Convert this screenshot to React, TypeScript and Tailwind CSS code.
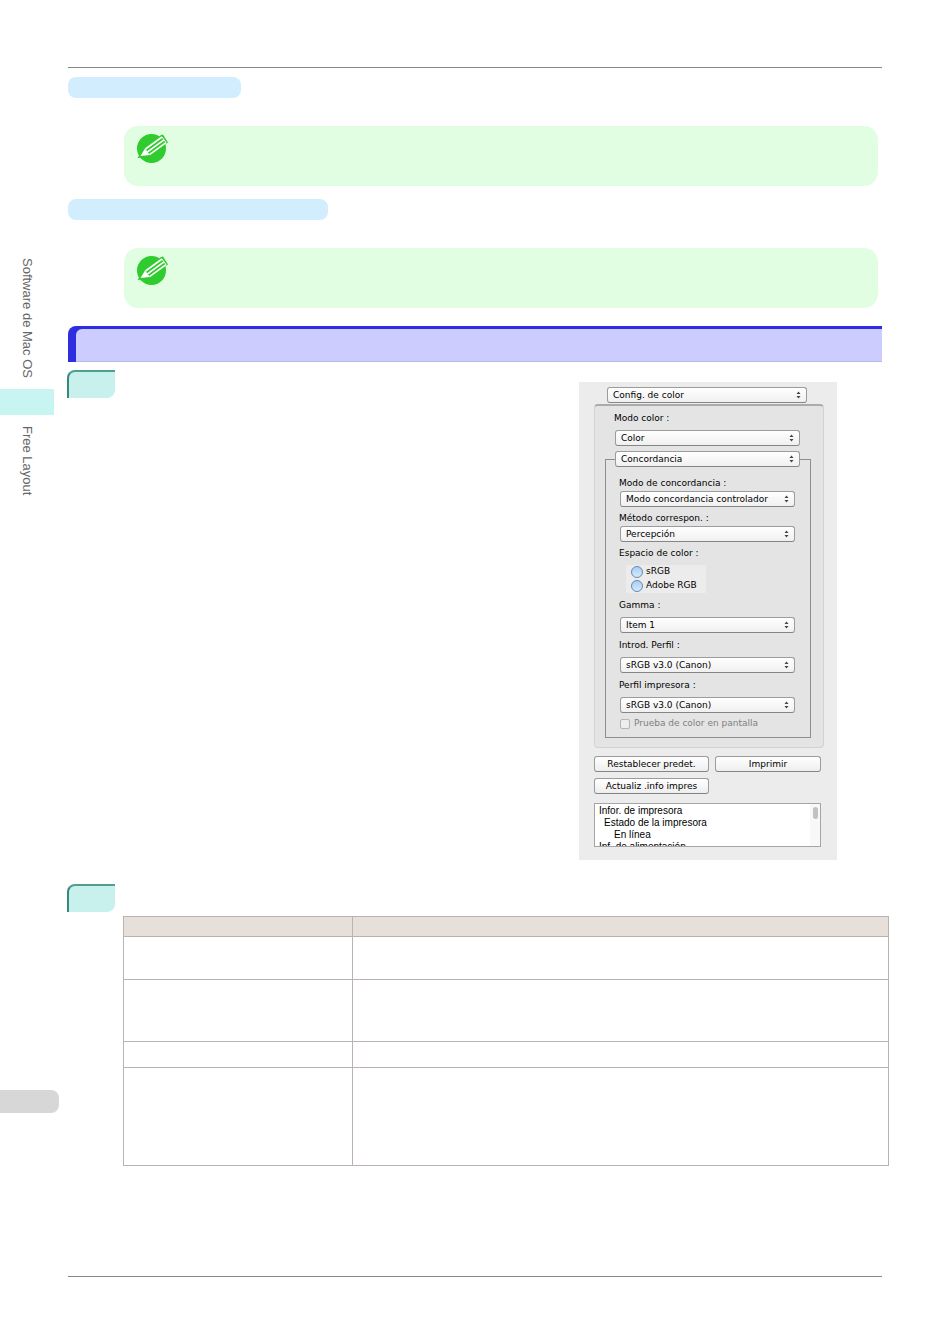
import React, { useId } from 'react';
import clsx from 'clsx';

const NoteIcon: React.FC = () => (
  <svg className="block h-8 w-8" viewBox="0 0 32 32" aria-hidden="true">
    <circle cx="15.5" cy="15.5" r="14.5" fill="#2fcb2f" />
    <path d="M1.500 25 L6 18 L25 2 L27 1.500 L32 9.500 L12 24 Z" fill="#2fcb2f" />
    <path d="M4.500 23 L9 15.500 L14 22 Z" fill="#fff" />
    <path
      d="M9.500 16 L26 4 M11.500 18.800 L28 6.800 M13.500 21.600 L30 9.600"
      fill="none"
      stroke="#fff"
      strokeWidth="1.600"
    />
    <path d="M26 4 L30 9.600" stroke="#fff" strokeWidth="1" />
  </svg>
);

const Pill: React.FC<{ className: string }> = ({ className }) => (
  <div className={clsx('h-[21px] rounded-lg bg-[#d2eefe]', className)} />
);

const Note: React.FC = () => (
  <div className="ml-14 mr-1 mt-7 h-[60px] rounded-[14px] bg-[#e2fee2] pl-3 pt-[7px]">
    <NoteIcon />
  </div>
);

const StepTab: React.FC = () => (
  <div className="-ml-px h-7 w-12 shrink-0 rounded-tl-lg rounded-br-lg border-l-2 border-t-2 border-l-[#35897a] border-t-[#4d9f8e] bg-[#c8f0ec]" />
);

const PopUp: React.FC<{ options: string[]; id?: string; label?: string; className?: string }> = ({
  options,
  id,
  label,
  className,
}) => (
  <div className={clsx('relative', className)}>
    <select
      id={id}
      aria-label={label}
      className="block h-4 w-full appearance-none rounded-[3px] border border-[#9c9c9c] border-b-[#858585] bg-linear-to-b from-white to-[#f0f0f0] pl-[5px] pr-4 leading-[14px]"
    >
      {options.map((option) => (
        <option key={option}>{option}</option>
      ))}
    </select>
    <svg className="pointer-events-none absolute right-1.5 top-1 h-2 w-[5px]" viewBox="0 0 5 8" aria-hidden="true">
      <path d="M0.500 3 L2.500 0.500 L4.500 3 Z M0.500 5 L2.500 7.500 L4.500 5 Z" fill="#444" />
    </svg>
  </div>
);

const Field: React.FC<{ label: string; option: string; className: string; gap: string }> = ({
  label,
  option,
  className,
  gap,
}) => {
  const id = useId();
  return (
    <div className={className}>
      <label htmlFor={id} className="-ml-px block leading-4">
        {label}
      </label>
      <PopUp id={id} options={[option]} className={gap} />
    </div>
  );
};

const Radio: React.FC<{ label: string }> = ({ label }) => (
  <label className="flex h-3.5 items-center gap-[3px]">
    <input
      type="radio"
      name="color-space"
      className="h-3 w-3 appearance-none rounded-full border border-[#6689b0] bg-linear-to-b from-[#a9cdf3] to-[#d3ecff]"
    />
    {label}
  </label>
);

const PushButton: React.FC<{ children: React.ReactNode; className: string }> = ({ children, className }) => (
  <button
    type="button"
    className={clsx(
      'h-4 rounded-[3px] border border-[#9c9c9c] border-b-[#858585] bg-linear-to-b from-white to-[#eeeeee] text-center leading-[14px]',
      className,
    )}
  >
    {children}
  </button>
);

const PrintDialog: React.FC = () => (
  <form className="w-[258px] shrink-0 bg-[#ececec] pb-[13px] pl-[15px] pr-[13px] pt-[5px] font-['DejaVu_Sans','Noto_Sans',sans-serif] text-[9px] text-black">
    <PopUp label="Panel" options={['Config. de color']} className="ml-[13px] mr-[17px]" />

    <div className="mt-px rounded-sm border border-t-2 border-[#d2d2d2] border-t-[#ababab] bg-[#e4e4e4] pb-[9px] pl-2.5 pr-3 pt-1">
      <Field label="Modo color :" option="Color" className="ml-2.5 mr-[11px]" gap="mt-1" />

      <fieldset className="mt-[5px] min-w-0 border border-[#8e8e8e] pb-[5px] pl-3.5 pr-[15px]">
        <legend className="-ml-[5px] w-[185px]">
          <PopUp label="Concordancia" options={['Concordancia']} />
        </legend>
        <Field label="Modo de concordancia :" option="Modo concordancia controlador" className="mt-2" gap="" />
        <Field label="Método correspon. :" option="Percepción" className="mt-[3px]" gap="" />
        <div className="mt-[3px]">
          <p className="-ml-px leading-4">Espacio de color :</p>
          <div className="ml-1.5 mt-1 w-20 bg-[#ececec] pl-[5px]">
            <Radio label="sRGB" />
            <Radio label="Adobe RGB" />
          </div>
        </div>
        <Field label="Gamma :" option="Item 1" className="mt-1" gap="mt-1" />
        <Field label="Introd. Perfil :" option="sRGB v3.0 (Canon)" className="mt-1" gap="mt-1" />
        <Field label="Perfil impresora :" option="sRGB v3.0 (Canon)" className="mt-1" gap="mt-1" />
        <label className="mt-[3px] flex h-4 items-center gap-1 text-[#808080]">
          <input
            type="checkbox"
            disabled
            className="h-2.5 w-2.5 appearance-none rounded-[2px] border border-[#b4b4b4] bg-[#eeeeee]"
          />
          Prueba de color en pantalla
        </label>
      </fieldset>
    </div>

    <div className="mt-2 flex gap-1.5 pr-[3px]">
      <PushButton className="w-[115px]">Restablecer predet.</PushButton>
      <PushButton className="flex-1">Imprimir</PushButton>
    </div>
    <div className="mt-1.5 flex">
      <PushButton className="w-[115px]">Actualiz .info impres</PushButton>
    </div>

    <div className="relative mr-[3px] mt-[9px] h-11 overflow-hidden border border-[#a5a5a5] bg-white pl-1 font-['Liberation_Sans',Arial,sans-serif] text-[10px] leading-3">
      <ul className="pt-px">
        <li>Infor. de impresora</li>
        <li className="pl-[5px]">Estado de la impresora</li>
        <li className="pl-[15px]">En línea</li>
        <li>Inf. de alimentación</li>
      </ul>
      <div className="absolute inset-y-0 right-0 w-2.5 bg-[#f8f8f8] pl-[3px] pt-[3px]">
        <div className="h-3 w-[5px] rounded-sm bg-[#c1c1c1]" />
      </div>
    </div>
  </form>
);

const rowHeights = ['h-[43px]', 'h-[62px]', 'h-[26px]', 'h-[98px]'];

const SideNav: React.FC = () => (
  <nav className="flex w-[68px] shrink-0 flex-col items-start pt-[258px] font-['Liberation_Sans',Arial,sans-serif] text-[13px] leading-4 text-[#666]">
    <a href="#software" className="ml-[19px] h-[122px] whitespace-nowrap [writing-mode:vertical-rl]">
      Software de Mac OS
    </a>
    <div className="mt-[9px] h-[26px] w-[54px] bg-[#c8f4f2]" />
    <a href="#free-layout" className="ml-[19px] mt-[11px] h-[70px] whitespace-nowrap [writing-mode:vertical-rl]">
      Free Layout
    </a>
    <div className="mt-[594px] h-[23px] w-[59px] rounded-r-lg bg-[#d7d7d7]" />
  </nav>
);

export default function App() {
  return (
    <div className="flex bg-white">
      <SideNav />
      <main className="mr-[61px] min-w-0 flex-1 pb-[67px] pt-[67px]">
        <div className="mr-[7px]">
          <hr className="border-t border-[#868686]" />
          <Pill className="mt-[9px] w-[173px]" />
          <Note />
          <Pill className="mt-[13px] w-[260px]" />
          <Note />

          <div className="mt-[18px] h-9 rounded-tl-lg bg-[#2e2ee0] pl-2 pt-[3px]">
            <div className="h-full rounded-tl-md border-b border-[#b9b9ea] bg-[#ccccff]" />
          </div>

          <section className="mt-2 flex items-start justify-between pr-[45px]">
            <StepTab />
            <div className="pt-3">
              <PrintDialog />
            </div>
          </section>
        </div>

        <section className="mt-6">
          <StepTab />
          <div className="ml-[55px] mt-1">
            <table className="w-full table-fixed border-collapse">
              <thead>
                <tr className="h-5 bg-[#e7dfda]">
                  <th className="w-[229px] border border-[#bbb3af]" />
                  <th className="border border-[#bbb3af]" />
                </tr>
              </thead>
              <tbody>
                {rowHeights.map((height) => (
                  <tr key={height} className={height}>
                    <td className="border border-[#bbb3af]" />
                    <td className="border border-[#bbb3af]" />
                  </tr>
                ))}
              </tbody>
            </table>
          </div>
        </section>

        <hr className="mr-[7px] mt-[110px] border-t border-[#868686]" />
      </main>
    </div>
  );
}
